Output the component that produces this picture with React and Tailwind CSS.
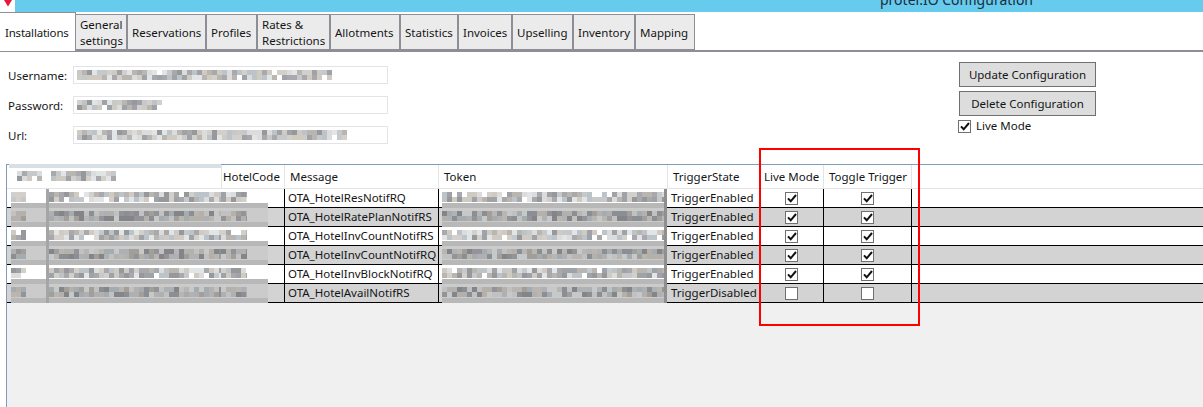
import React from "react";

function rng(seed) {
  let s = seed;
  return () => {
    s = (s * 1664525 + 1013904223) % 4294967296;
    return s / 4294967296;
  };
}

const PALETTE = ["#b9b5b0", "#a9a9ad", "#c6c9cc", "#d3d0cb", "#9fa3a8", "#bcc4c9", "#cfcac2", "#e2e5e6", "#96989c", "#dcdcdc"];

function Mosaic({ w, h, cell = 5, seed = 1, fill = 0.96, dark = false, className = "" }) {
  const r = rng(seed);
  const rects = [];
  for (let y = 0; y < h; y += cell) {
    for (let x = 0; x < w; x += cell) {
      const v = r();
      const c = PALETTE[Math.floor(r() * PALETTE.length)];
      if (v > fill) continue;
      rects.push(<rect key={x + "-" + y} x={x} y={y} width={cell} height={cell} fill={c} />);
    }
  }
  return (
    <svg width={w} height={h} className={"block shrink-0 " + className} shapeRendering="crispEdges">
      {rects}
      {dark && <rect width={w} height={h} fill="#000" opacity="0.12" />}
    </svg>
  );
}

/* one blurred table cell: pale fringe, a band of pixels where the text was, and a grey smear below it */
function BlurCell({ w, mw, seed, grey, fill }) {
  return (
    <div className={"flex h-[19px] shrink-0 flex-col " + (grey ? "bg-[#cbcbcb]" : "bg-white")} style={{ width: w }}>
      <div className="h-[3px]" />
      <Mosaic w={mw || w} h={10} seed={seed} fill={fill} dark={grey} />
      <div className="h-px" />
      <div className="h-[5px] bg-[#b8b8b8]" />
    </div>
  );
}

const tabs = [
  ["General", "settings", 52],
  ["Reservations", null, 79],
  ["Profiles", null, 51],
  ["Rates &", "Restrictions", 73],
  ["Allotments", null, 70],
  ["Statistics", null, 58],
  ["Invoices", null, 54],
  ["Upselling", null, 61],
  ["Inventory", null, 62],
  ["Mapping", null, 60],
];

const rows = [
  ["OTA_HotelResNotifRQ", "TriggerEnabled", true],
  ["OTA_HotelRatePlanNotifRS", "TriggerEnabled", true],
  ["OTA_HotelInvCountNotifRS", "TriggerEnabled", true],
  ["OTA_HotelInvCountNotifRQ", "TriggerEnabled", true],
  ["OTA_HotelInvBlockNotifRQ", "TriggerEnabled", true],
  ["OTA_HotelAvailNotifRS", "TriggerDisabled", false],
];

function Check({ on, className = "" }) {
  return (
    <div className={"flex h-[13px] w-[13px] shrink-0 items-center justify-center border border-[#707070] bg-white " + className}>
      {on && (
        <svg width="10" height="9" viewBox="0 0 10 9">
          <path d="M1 4.4 L3.7 7.3 L9 1" fill="none" stroke="#111" strokeWidth="2" />
        </svg>
      )}
    </div>
  );
}

function Field({ label, seed, w }) {
  return (
    <div className="flex h-[18px] items-center">
      <div className="w-[73px] pl-2 pt-px">{label}</div>
      <div className="flex h-[18px] w-[315px] items-center overflow-hidden border border-[#e3e3e8] bg-white pl-[3px]">
        <Mosaic w={w} h={10} cell={5} seed={seed} />
      </div>
    </div>
  );
}

export default function App() {
  return (
    <div
      className="relative h-[407px] w-[1203px] overflow-hidden bg-white text-[11.5px] leading-[16px] text-[#151515]"
      style={{ fontFamily: '"Noto Sans", sans-serif' }}
    >
      {/* title bar */}
      <div className="flex h-3 overflow-hidden bg-[#66cbec]">
        <svg width="15" height="12" className="shrink-0 bg-white">
          <path d="M4 0 H12 L8 6.5 Z" fill="#e8173f" />
        </svg>
        <div className="-mt-[10px] ml-[865px] text-[14px] leading-[20px] text-[#1c2c3c]">protel.IO Configuration</div>
      </div>

      {/* tabs */}
      <div className="h-[40px] border-b-2 border-[#8e8e96] pt-[2px]">
        <div className="relative flex h-[36px] items-stretch">
          <div className="absolute -top-[2px] left-0 z-10 flex h-[39px] w-[76px] items-center border-t border-r border-[#8e8e96] bg-white pl-[5px] pt-px tracking-[-0.2px]">
            Installations
          </div>
          <div className="w-[75px] shrink-0" />
          {tabs.map(([a, b, w]) => (
            <div
              key={a}
              style={{ width: w }}
              className="flex shrink-0 flex-col justify-center border border-[#8e8e96] bg-[#ebebeb] pl-[4px] pt-px leading-[16px]"
            >
              <span>{a}</span>
              {b && <span>{b}</span>}
            </div>
          ))}
        </div>
      </div>

      {/* form */}
      <div className="flex h-[112px] items-start justify-between">
        <div className="flex flex-col gap-3 pt-3.5">
          <Field label="Username:" seed={11} w={255} />
          <Field label="Password:" seed={23} w={85} />
          <Field label="Url:" seed={37} w={270} />
        </div>
        <div className="flex w-[244px] flex-col pt-2.5">
          <div className="flex h-[25px] w-[137px] items-center justify-center border border-[#707070] bg-[#dddddd]">
            Update Configuration
          </div>
          <div className="mt-1 flex h-[25px] w-[137px] items-center justify-center border border-[#707070] bg-[#dddddd]">
            Delete Configuration
          </div>
          <div className="-ml-px mt-[2px] flex items-center gap-[5px]">
            <Check on />
            <span>Live Mode</span>
          </div>
        </div>
      </div>

      {/* grid */}
      <div className="ml-[6px] h-[243px] border-t border-l border-[#7f9db9] bg-[#f0f0f0]">
        <div className="flex h-[24px] items-stretch border-b border-[#e4e4e4] bg-white">
          <div className="w-[214px] shrink-0">
            <div className="-mt-px ml-[2px] h-[4px] w-[212px] bg-[#d8e0e6]" />
            <div className="flex items-center pl-[10px] pt-[3px]">
              <Mosaic w={25} h={10} seed={41} />
              <div className="w-[9px]" />
              <Mosaic w={65} h={10} seed={43} />
            </div>
          </div>
          {[
            ["HotelCode", 63, 1],
            ["Message", 154, 5],
            ["Token", 229, 5],
            ["TriggerState", 92, 5],
            ["Live Mode", 64, 4],
            ["Toggle Trigger", 89, 5],
          ].map(([t, w, p], i) => (
            <div
              key={t}
              style={{ width: w, paddingLeft: p }}
              className={"flex shrink-0 items-center border-l border-[#e4e4e4] pt-px " + (i === 5 ? "border-r" : "")}
            >
              {t}
            </div>
          ))}
        </div>
        {rows.map(([m, s, on], i) => {
          const g = i % 2 === 1;
          return (
            <div key={m} className={"flex h-[19px] items-start border-b border-black " + (g ? "bg-[#d3d3d3]" : "bg-white")}>
              <div className="flex w-[214px] shrink-0 pl-[4px]">
                <BlurCell w={35} mw={15} seed={100 + i * 7} grey={g} fill={0.7} />
                <div className="h-[19px] w-[3px] bg-[#a5a5a5]" />
                <BlurCell w={172} seed={200 + i * 9} grey={g} />
              </div>
              <div className="flex w-[63px] shrink-0">
                <BlurCell w={47} mw={26} seed={300 + i * 5} grey={g} />
              </div>
              <div className="flex h-[18px] w-[154px] shrink-0 items-center border-l border-black pl-[3px]">{m}</div>
              <div className="flex h-[18px] w-[229px] shrink-0 items-start border-l border-black pl-[3px]">
                <BlurCell w={222} seed={400 + i * 3} grey={g} />
                <div className="h-[19px] w-[3px] bg-[#8f8f8f]" />
              </div>
              <div className="flex h-[18px] w-[92px] shrink-0 items-center pl-[4px]">{s}</div>
              <div className="flex h-[18px] w-[64px] shrink-0 items-center justify-center border-l border-black">
                <Check on={on} />
              </div>
              <div className="flex h-[18px] w-[89px] shrink-0 items-center justify-center border-x border-black">
                <Check on={on} />
              </div>
            </div>
          );
        })}
      </div>

      {/* red annotation */}
      <div className="absolute top-[148px] left-[759px] h-[178px] w-[161px] border-2 border-[#ff0000]" />
    </div>
  );
}
